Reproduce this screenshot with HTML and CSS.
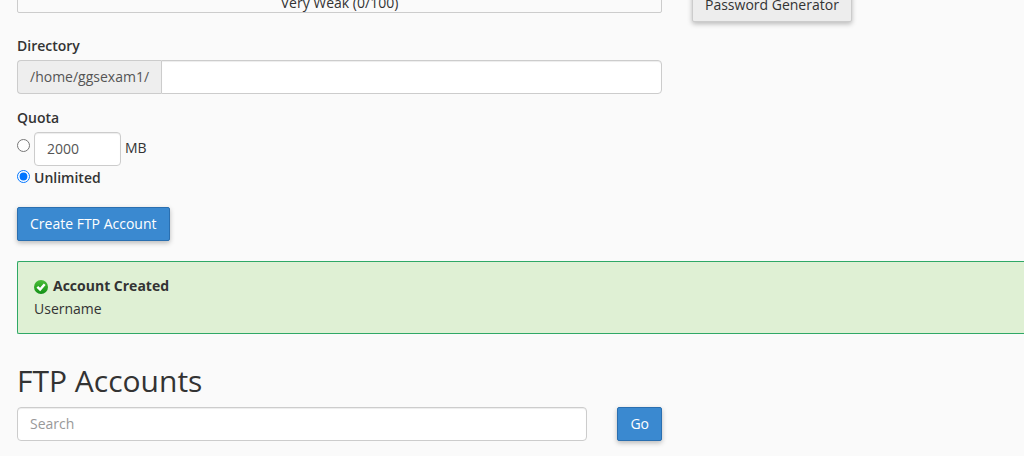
FILE: index.html
```html
<!DOCTYPE html>
<html lang="en">
<head>
<meta charset="utf-8">
<title>FTP Accounts</title>
<link rel="stylesheet" href="styles.css">
</head>
<body>
<main class="page">
  <form class="create-form">
    <div class="strength-row">
      <div class="strength-meter">Very Weak (0/100)</div>
      <button type="button" class="btn btn-default">Password Generator</button>
    </div>

    <div class="field">
      <label class="label" for="directory">Directory</label>
      <div class="input-group">
        <span class="addon">/home/ggsexam1/</span>
        <input class="control" id="directory" type="text">
      </div>
    </div>

    <fieldset class="quota">
      <legend class="label">Quota</legend>
      <div class="quota-row">
        <input class="radio" type="radio" name="quota" aria-label="Limited quota">
        <input class="control quota-size" id="quota-size" type="text" value="2000">
        <label class="unit" for="quota-size">MB</label>
      </div>
      <div class="quota-row">
        <input class="radio" type="radio" name="quota" id="unlimited" checked>
        <label class="label" for="unlimited">Unlimited</label>
      </div>
    </fieldset>

    <button type="button" class="btn btn-primary">Create FTP Account</button>
  </form>

  <section class="alert" role="status">
    <div class="alert-title">
      <svg class="alert-icon" viewBox="0 0 16 16" aria-hidden="true">
        <defs>
          <linearGradient id="green" x1="0" y1="0" x2="0" y2="1">
            <stop offset="0" stop-color="#4bbd3b"/>
            <stop offset="0.5" stop-color="#2fa824"/>
            <stop offset="1" stop-color="#14901a"/>
          </linearGradient>
        </defs>
        <circle cx="8" cy="8" r="8" fill="url(#green)"/>
        <path d="M3.8 7.8 L7 10.8 L12.2 4.8" fill="none" stroke="#fff" stroke-width="2.8"/>
      </svg>
      <strong>Account Created</strong>
    </div>
    <div>Username</div>
  </section>

  <h2 class="heading">FTP Accounts</h2>
  <form class="search-row">
    <input class="control" type="text" placeholder="Search" aria-label="Search">
    <button type="button" class="btn btn-primary">Go</button>
  </form>
</main>
</body>
</html>
```
FILE: styles.css
```css
* {
  box-sizing: border-box;
}

body {
  margin: 0;
  background: #fafafa;
  color: #333;
  font: 14px/20px "Open Sans", sans-serif;
}

.page {
  margin-top: -12px;
  padding: 0 0 15px 17px;
}

.strength-row {
  display: flex;
  align-items: flex-start;
  gap: 30px;
}

.strength-meter {
  flex: 0 1 645px;
  height: 25px;
  padding-top: 5px;
  border: 1px solid #ccc;
  border-radius: 2px;
  line-height: 18px;
  text-align: center;
}

.btn {
  height: 34px;
  padding: 0 12px;
  border: 1px solid;
  border-radius: 2px;
  box-shadow: 0 2px 5px rgba(0, 0, 0, 0.26);
  font: inherit;
  white-space: nowrap;
}

.btn-default {
  background: #ededed;
  border-color: #ccc;
  color: #333;
}

.btn-primary {
  background: #3a89d0;
  border-color: #2a6fb0;
  color: #fff;
}

.field {
  max-width: 645px;
  margin-top: 14px;
}

.label {
  display: block;
  padding: 0;
  font-weight: 600;
}

.input-group {
  display: flex;
  margin-top: 4px;
}

.addon {
  padding: 6px 12px;
  background: #eee;
  border: 1px solid #ccc;
  border-right: 0;
  border-radius: 4px 0 0 4px;
  color: #555;
}

.control {
  flex: 1;
  min-width: 0;
  height: 34px;
  padding: 5px 12px 7px;
  background: #fff;
  border: 1px solid #ccc;
  border-radius: 4px;
  box-shadow: inset 0 1px 1px rgba(0, 0, 0, 0.075);
  color: #555;
  font: inherit;
}

.control::placeholder {
  color: #999;
}

.addon + .control {
  border-radius: 0 4px 4px 0;
}

.quota {
  margin: 14px 0 19px;
  padding: 0;
  border: 0;
}

.quota-row {
  display: flex;
  align-items: center;
  gap: 4px;
  margin-top: 2px;
}

.label + .quota-row {
  margin-top: 4px;
}

.radio {
  width: 13px;
  height: 13px;
  margin: 0 0 4px;
}

.label + .quota-row .radio {
  margin-bottom: 8px;
}

.unit {
  padding-bottom: 2px;
}

.quota-size {
  flex: 0 0 87px;
}

.alert {
  margin-top: 20px;
  padding: 12px 16px 13px;
  background: #dff0d4;
  border: 1px solid #2fa866;
  border-right: 0;
  border-radius: 2px 0 0 2px;
  line-height: 23px;
}

.alert-title {
  display: flex;
  align-items: center;
  gap: 5px;
}

.alert-icon {
  width: 14px;
  height: 14px;
  margin-top: 2px;
}

.heading {
  margin: 30px 0 9px;
  font-size: 30px;
  font-weight: 400;
  line-height: 34px;
}

.search-row {
  display: flex;
  gap: 30px;
  max-width: 645px;
}
```
